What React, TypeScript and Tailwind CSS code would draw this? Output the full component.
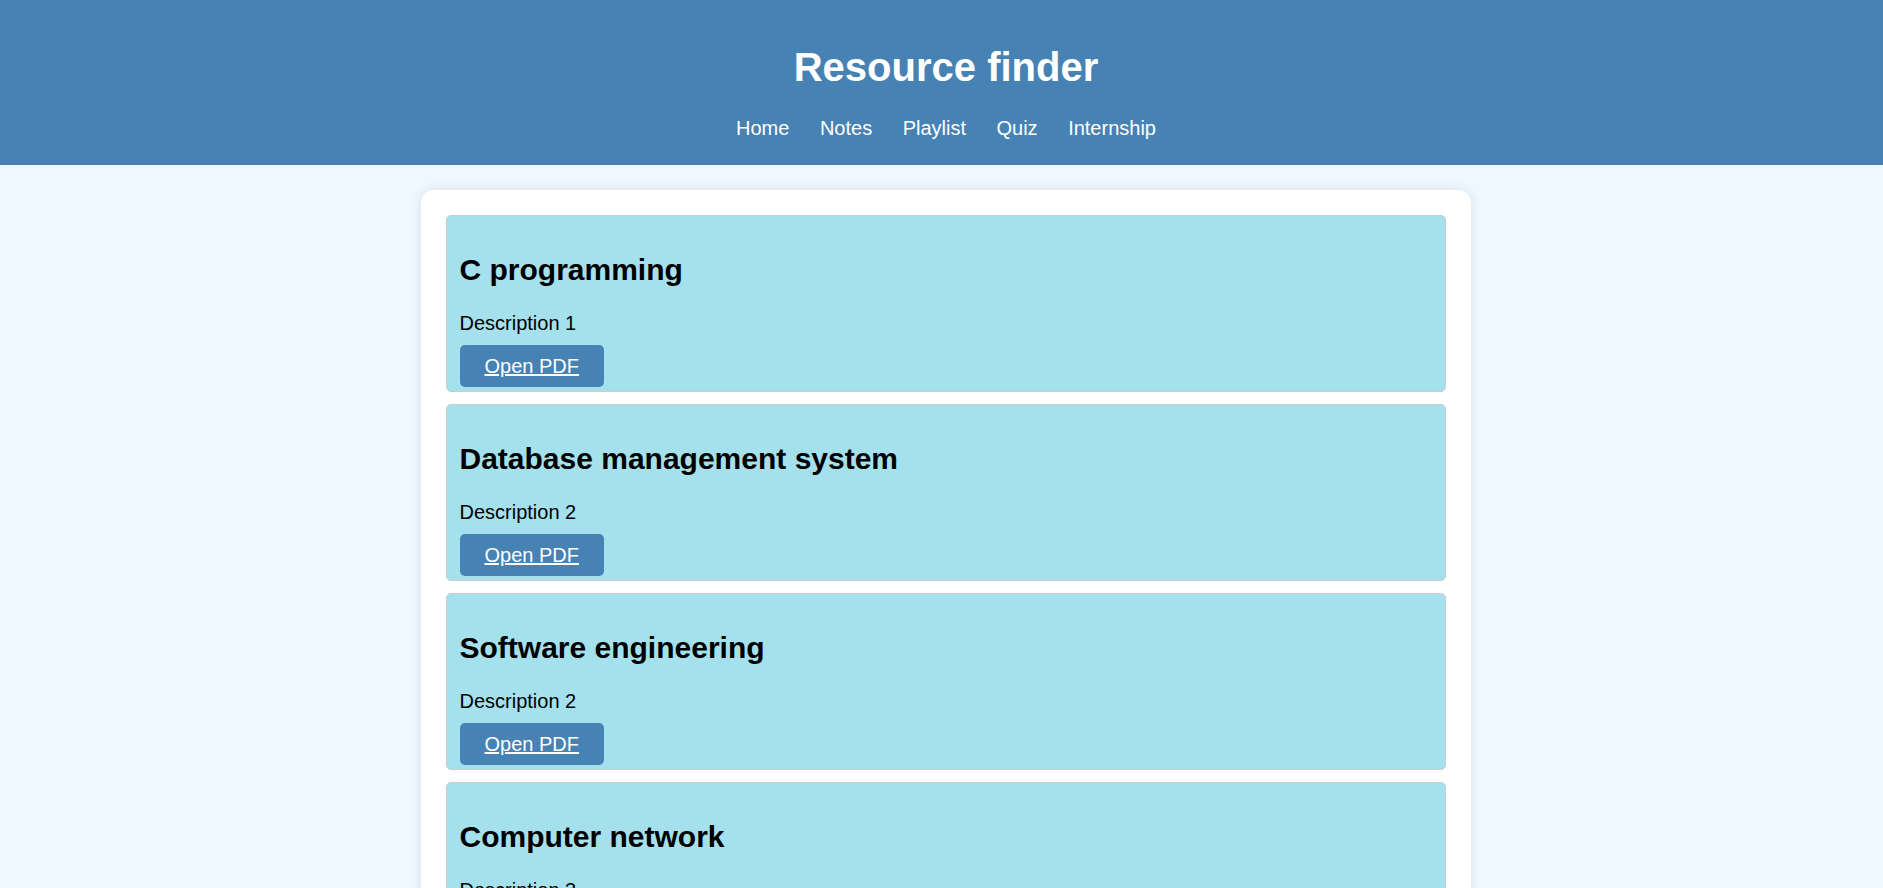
import React from 'react';

const resources = [
  { title: 'C programming', description: 'Description 1' },
  { title: 'Database management system', description: 'Description 2' },
  { title: 'Software engineering', description: 'Description 2' },
  { title: 'Computer network', description: 'Description 3' },
  { title: 'Operating system', description: 'Description 4' },
];

const links = ['Home', 'Notes', 'Playlist', 'Quiz', 'Internship'];

function ResourceCard({ title, description }: { title: string; description: string }) {
  return (
    <div className="mb-[12.5px] rounded-[5px] border border-[#cccccc] bg-[#a5e1ec] p-[12.5px]">
      <h2 className="mb-[25px] mt-[24px] text-[30px] font-bold leading-[34.5px] text-black">{title}</h2>
      <p className="text-[20px] leading-[23px] text-black">{description}</p>
      <div className="mt-[20px] h-[23px] text-[20px] leading-[23px]">
        <a href="#" className="rounded-[5px] bg-[#4682b4] px-[25px] py-[10px] text-white underline">
          Open PDF
        </a>
      </div>
    </div>
  );
}

export default function App() {
  return (
    <div className="min-h-screen bg-[#f0f8ff] pl-[9px] font-['Liberation_Sans',Arial,sans-serif]">
      <header className="-ml-[9px] bg-[#4682b4] pb-[25px] pl-[9px] pt-[44px] text-center text-white">
        <h1 className="mb-[27px] text-[40px] font-bold leading-[46px]">Resource finder</h1>
        <nav className="flex justify-center gap-[30.5px] text-[20px] leading-[23px]">
          {links.map((l) => (
            <a key={l} href="#" className="text-white">
              {l}
            </a>
          ))}
        </nav>
      </header>

      <main className="mx-auto mt-[25px] w-[1050px] rounded-[12.5px] bg-white p-[25px] pb-[12.5px] shadow-[0_0_12px_rgba(0,0,0,0.1)]">
        {resources.map((r) => (
          <ResourceCard key={r.title} title={r.title} description={r.description} />
        ))}
      </main>
    </div>
  );
}
